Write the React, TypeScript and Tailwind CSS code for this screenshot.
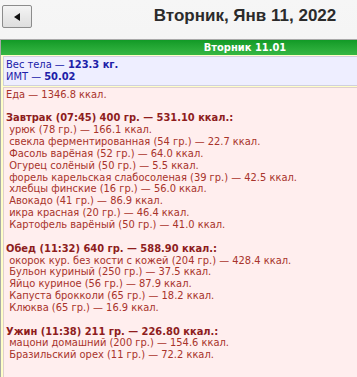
const meals = [
  {
    title: "Завтрак (07:45) 400 гр. — 531.10 ккал.:",
    items: [
      "урюк (78 гр.) — 166.1 ккал.",
      "свекла ферментированная (54 гр.) — 22.7 ккал.",
      "Фасоль варёная (52 гр.) — 64.0 ккал.",
      "Огурец солёный (50 гр.) — 5.5 ккал.",
      "форель карельская слабосоленая (39 гр.) — 42.5 ккал.",
      "хлебцы финские (16 гр.) — 56.0 ккал.",
      "Авокадо (41 гр.) — 86.9 ккал.",
      "икра красная (20 гр.) — 46.4 ккал.",
      "Картофель варёный (50 гр.) — 41.0 ккал.",
    ],
  },
  {
    title: "Обед (11:32) 640 гр. — 588.90 ккал.:",
    items: [
      "окорок кур. без кости с кожей (204 гр.) — 428.4 ккал.",
      "Бульон куриный (250 гр.) — 37.5 ккал.",
      "Яйцо куриное (56 гр.) — 87.9 ккал.",
      "Капуста брокколи (65 гр.) — 18.2 ккал.",
      "Клюква (65 гр.) — 16.9 ккал.",
    ],
  },
  {
    title: "Ужин (11:38) 211 гр. — 226.80 ккал.:",
    items: [
      "мацони домашний (200 гр.) — 154.6 ккал.",
      "Бразильский орех (11 гр.) — 72.2 ккал.",
    ],
  },
];

const Line = ({ children, className = "" }: { children?: React.ReactNode; className?: string }) => (
  <div className={"h-[11.85px] leading-[11.85px] whitespace-pre " + className}>{children}</div>
);

export default function App() {
  return (
    <div className="w-[357px] h-[377px] overflow-hidden bg-gradient-to-b from-[#f6f6f6] to-[#ebebeb] font-['Liberation_Sans',Arial,sans-serif]">
      <div className="w-[490px]">
        {/* header */}
        <div className="grid grid-cols-[1fr_auto_1fr] items-start h-[39px]">
          <div className="pt-[5px] pl-[2px]">
            <button className="w-[30px] h-[23px] flex items-center justify-center border border-[#8c8c8c] rounded-[2px] bg-gradient-to-b from-[#f4f4f4] to-[#dedede]">
              <svg width="6" height="8" viewBox="0 0 6 8">
                <path d="M6 0 L0 4 L6 8 Z" fill="#111" />
              </svg>
            </button>
          </div>
          <h1 className="pt-[6px] text-[17px] leading-[20px] font-bold text-[#2b2b2b]">
            Вторник, Янв 11, 2022
          </h1>
          <div />
        </div>

        {/* day table */}
        <div className="border border-[#a9a9a9] bg-[#ffffc8] font-['DejaVu_Sans_Condensed','DejaVu_Sans',sans-serif] text-[11px]">
          <div className="h-[15px] leading-[15px] text-center font-bold text-white bg-gradient-to-b from-[#119a26] to-[#35b744]">
            Вторник 11.01
          </div>
          <div className="p-[2px] pt-[1px] flex flex-col gap-px">
            <div className="border border-[#cfcfdf] bg-[#eeeeff] text-[#2020a8] pl-[2px] py-[2px]">
              <Line>
                Вес тела — <b>123.3 кг.</b>
              </Line>
              <Line>
                ИМТ — <b>50.02</b>
              </Line>
            </div>
            <div className="border border-[#dfcfcf] bg-[#ffeeee] text-[#a8332b] pl-[2px] pt-px pb-[4px]">
              <Line>Еда — 1346.8 ккал.</Line>
              <Line />
              {meals.map((m) => (
                <div key={m.title}>
                  <Line className="font-bold text-[#8e1d1d]">{m.title}</Line>
                  {m.items.map((it) => (
                    <Line key={it}>{" " + it}</Line>
                  ))}
                  <Line />
                </div>
              ))}
            </div>
          </div>
        </div>
      </div>
    </div>
  );
}
